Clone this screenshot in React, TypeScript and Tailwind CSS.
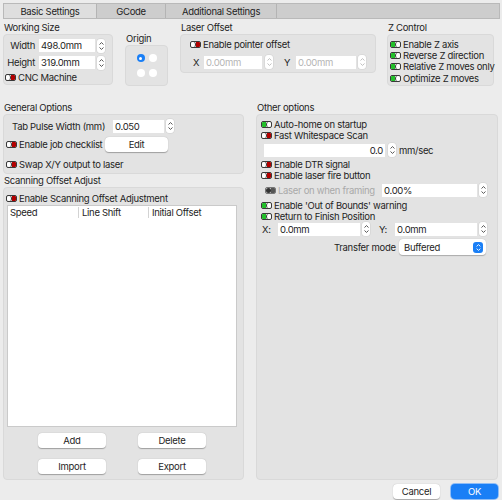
import React from "react"

const font = { fontFamily: "Inter, 'Noto Sans', sans-serif" }

function Toggle({ on = false, disabled = false }: { on?: boolean; disabled?: boolean }) {
    if (disabled) {
        return (
            <div className="flex h-[7px] w-[11px] shrink-0 items-center overflow-hidden rounded-[2px] border border-[#777] bg-[#cfcfcf]">
                <div className="h-full w-[5px] rounded-full bg-[#333]" />
                <div className="h-full flex-1 bg-[#555]" />
            </div>
        )
    }
    return on ? (
        <div className="flex h-[7px] w-[11px] shrink-0 items-center overflow-hidden rounded-[2px] border border-[#3a3a3a]">
            <div className="h-full flex-1 bg-[#22c02a]" />
            <div className="h-full w-[5px] rounded-full border-l border-[#3a3a3a] bg-white" />
        </div>
    ) : (
        <div className="flex h-[7px] w-[11px] shrink-0 items-center overflow-hidden rounded-[2px] border border-[#3a3a3a]">
            <div className="h-full w-[5px] rounded-full border-r border-[#3a3a3a] bg-white" />
            <div className="h-full flex-1 bg-[#b20000]" />
        </div>
    )
}

function Check({ label, on, dim }: { label: string; on?: boolean; dim?: boolean }) {
    return (
        <div className={`flex h-[11px] items-center gap-[2px] whitespace-nowrap ${dim ? "text-[#a9a9a9]" : ""}`}>
            <Toggle on={on} disabled={dim} />
            <span>{label}</span>
        </div>
    )
}

function Spin({ dim }: { dim?: boolean }) {
    const c = dim ? "#b8b8b8" : "#444"
    return (
        <div className="flex h-[14px] w-[8px] shrink-0 flex-col items-center justify-center gap-[2px] rounded-[3px] bg-white shadow-[0_0_0_0.5px_#cfcfcf]">
            <svg width="5" height="3" viewBox="0 0 5 3"><path d="M0.5 2.5 L2.5 0.6 L4.5 2.5" fill="none" stroke={c} strokeWidth="0.9" /></svg>
            <svg width="5" height="3" viewBox="0 0 5 3"><path d="M0.5 0.5 L2.5 2.4 L4.5 0.5" fill="none" stroke={c} strokeWidth="0.9" /></svg>
        </div>
    )
}

function Field({ value, w, dim, right }: { value: string; w: string; dim?: boolean; right?: boolean }) {
    return (
        <div className={`flex h-[13px] shrink-0 items-center bg-white px-[2px] ${w} ${right ? "justify-end" : ""} ${dim ? "text-[#b5b5b5]" : ""}`}>
            {value}
        </div>
    )
}

function Btn({ label, w }: { label: string; w: string }) {
    return (
        <div className={`flex h-[15px] shrink-0 items-center justify-center rounded-[4px] bg-white shadow-[0_0.5px_1px_rgba(0,0,0,0.3)] ${w}`}>
            {label}
        </div>
    )
}

function Title({ text }: { text: string }) {
    return <div className="h-[11px] whitespace-nowrap pl-[1px] leading-[11px]">{text}</div>
}

const box = "rounded-[4px] border border-[#d9d9d9] bg-[#e3e3e3]"

export default function App() {
    return (
        <div style={font} className="flex h-[500px] w-[502px] flex-col overflow-hidden whitespace-nowrap bg-[#ececec] text-[9.5px] leading-[11px] tracking-[-0.3px] text-[#1e1e1e]">
            {/* tabs */}
            <div className="ml-[3px] mr-[2px] mt-[3px] flex h-[16px] border border-[#b9b9b9] bg-[#cdcdcd]">
                <div className="flex w-[93px] items-center justify-center border-r border-[#b4b4b4] bg-[#dedede]">Basic Settings</div>
                <div className="flex w-[69px] items-center justify-center border-r border-[#b4b4b4]">GCode</div>
                <div className="flex w-[111px] items-center justify-center border-r border-[#b4b4b4]">Additional Settings</div>
            </div>

            {/* top row */}
            <div className="ml-[3px] mt-[3px] flex">
                <div className="w-[110px]">
                    <Title text="Working Size" />
                    <div className={`${box} mt-[1px] h-[51px] pt-[4px]`}>
                        <div className="flex h-[13px] items-center">
                            <span className="w-[31px] text-right">Width</span>
                            <div className="ml-[4px]"><Field value="498.0mm" w="w-[56px]" /></div>
                            <div className="ml-[2px]"><Spin /></div>
                        </div>
                        <div className="mt-[4px] flex h-[13px] items-center">
                            <span className="w-[31px] text-right">Height</span>
                            <div className="ml-[4px]"><Field value="319.0mm" w="w-[56px]" /></div>
                            <div className="ml-[2px]"><Spin /></div>
                        </div>
                        <div className="ml-[1px] mt-[3px]"><Check label="CNC Machine" /></div>
                    </div>
                </div>
                <div className="ml-[12px] w-[43px] pt-[11px]">
                    <div className="h-[11px] pl-[1px]">Origin</div>
                    <div className={`${box} mt-[1px] flex h-[41px] items-center justify-center`}>
                        <div className="grid grid-cols-2 gap-x-[4px] gap-y-[7px]">
                            <div className="flex h-[8px] w-[8px] items-center justify-center rounded-full bg-[#1a7ff6]">
                                <div className="h-[3px] w-[3px] rounded-full bg-white" />
                            </div>
                            <div className="h-[8px] w-[8px] rounded-full bg-white" />
                            <div className="h-[8px] w-[8px] rounded-full bg-white" />
                            <div className="h-[8px] w-[8px] rounded-full bg-white" />
                        </div>
                    </div>
                </div>
                <div className="ml-[12px] w-[196px]">
                    <Title text="Laser Offset" />
                    <div className={`${box} mt-[1px] h-[39px] pl-[9px] pt-[4px]`}>
                        <Check label="Enable pointer offset" />
                        <div className="mt-[5px] flex h-[14px] items-center">
                            <span className="ml-[3px] w-[11px]">X</span>
                            <Field value="0.00mm" w="w-[58px]" dim />
                            <div className="ml-[3px]"><Spin dim /></div>
                            <span className="ml-[11px] w-[12px]">Y</span>
                            <Field value="0.00mm" w="w-[60px]" dim />
                            <div className="ml-[2px]"><Spin dim /></div>
                        </div>
                    </div>
                </div>
                <div className="ml-[11px] w-[107px]">
                    <Title text="Z Control" />
                    <div className={`${box} mt-[1px] flex h-[52px] flex-col pl-[2px] pt-[4px]`}>
                        <Check label="Enable Z axis" on />
                        <Check label="Reverse Z direction" on />
                        <Check label="Relative Z moves only" on />
                        <div className="mt-[1px]"><Check label="Optimize Z moves" on /></div>
                    </div>
                </div>
            </div>

            {/* main columns */}
            <div className="ml-[3px] mt-[16px] flex">
                <div className="w-[241px]">
                    <Title text="General Options" />
                    <div className={`${box} mt-[1px] h-[60px] pt-[4px]`}>
                        <div className="flex h-[14px] items-center">
                            <span className="ml-[8px] w-[101px]">Tab Pulse Width (mm)</span>
                            <Field value="0.050" w="w-[51px]" />
                            <div className="ml-[2px]"><Spin /></div>
                        </div>
                        <div className="mt-[5px] flex h-[13px] items-center pl-[2px]">
                            <div className="w-[99px]"><Check label="Enable job checklist" /></div>
                            <Btn label="Edit" w="w-[63px] h-[13px]" />
                        </div>
                        <div className="mt-[8px] pl-[2px]"><Check label="Swap X/Y output to laser" /></div>
                    </div>
                    <div className="mt-[1px]"><Title text="Scanning Offset Adjust" /></div>
                    <div className={`${box} mt-[1px] h-[293px] px-[2px] pt-[5px]`}>
                        <Check label="Enable Scanning Offset Adjustment" />
                        <div className="ml-[1px] mt-[1px] h-[222px] w-[230px] border border-[#cacaca] bg-white">
                            <div className="flex h-[12px] items-center">
                                <div className="w-[71px] border-r border-[#d3d3d3] pl-[2px]">Speed</div>
                                <div className="w-[70px] border-r border-[#d3d3d3] pl-[3px]">Line Shift</div>
                                <div className="pl-[3px]">Initial Offset</div>
                            </div>
                        </div>
                        <div className="mt-[6px] flex gap-[32px] pl-[32px]">
                            <Btn label="Add" w="w-[68px]" />
                            <Btn label="Delete" w="w-[68px]" />
                        </div>
                        <div className="mt-[11px] flex gap-[32px] pl-[32px]">
                            <Btn label="Import" w="w-[68px]" />
                            <Btn label="Export" w="w-[68px]" />
                        </div>
                    </div>
                </div>

                <div className="ml-[12px] w-[242px]">
                    <Title text="Other options" />
                    <div className={`${box} mt-[1px] h-[366px] pl-[4px] pt-[4px]`}>
                        <Check label="Auto-home on startup" on />
                        <Check label="Fast Whitespace Scan" />
                        <div className="mt-[2px] flex h-[14px] items-center">
                            <div className="ml-[3px]"><Field value="0.0" w="w-[121px]" right /></div>
                            <div className="ml-[3px]"><Spin /></div>
                            <span className="ml-[3px]">mm/sec</span>
                        </div>
                        <div className="mt-[2px]"><Check label="Enable DTR signal" /></div>
                        <Check label="Enable laser fire button" />
                        <div className="mt-[2px] flex h-[14px] items-center">
                            <div className="ml-[4px] w-[117px]"><Check label="Laser on when framing" dim /></div>
                            <Field value="0.00%" w="w-[95px]" />
                            <div className="ml-[2px]"><Spin /></div>
                        </div>
                        <div className="mt-[3px]"><Check label="Enable 'Out of Bounds' warning" on /></div>
                        <Check label="Return to Finish Position" on />
                        <div className="flex h-[14px] items-center">
                            <span className="ml-[1px] w-[16px]">X:</span>
                            <Field value="0.0mm" w="w-[82px]" />
                            <div className="ml-[2px]"><Spin /></div>
                            <span className="ml-[9px] w-[16px]">Y:</span>
                            <Field value="0.0mm" w="w-[82px]" />
                            <div className="ml-[2px]"><Spin /></div>
                        </div>
                        <div className="mt-[3px] flex h-[16px] items-center">
                            <span className="ml-[73px] w-[65px]">Transfer mode</span>
                            <div className="flex h-[16px] w-[87px] items-center justify-between rounded-[4px] bg-white pl-[5px] pr-[3px] shadow-[0_0.5px_1px_rgba(0,0,0,0.25)]">
                                <span>Buffered</span>
                                <div className="flex h-[11px] w-[10px] flex-col items-center justify-center gap-[1px] rounded-[3px] bg-[#1a7ff6]">
                                    <svg width="5" height="3" viewBox="0 0 5 3"><path d="M0.6 2.4 L2.5 0.6 L4.4 2.4" fill="none" stroke="white" strokeWidth="0.9" /></svg>
                                    <svg width="5" height="3" viewBox="0 0 5 3"><path d="M0.6 0.6 L2.5 2.4 L4.4 0.6" fill="none" stroke="white" strokeWidth="0.9" /></svg>
                                </div>
                            </div>
                        </div>
                    </div>
                </div>
            </div>

            {/* footer */}
            <div className="mr-[4px] mt-[4px] flex justify-end gap-[11px]">
                <Btn label="Cancel" w="w-[47px]" />
                <div className="flex h-[15px] w-[47px] items-center justify-center rounded-[4px] bg-[#1a7ff6] text-white shadow-[0_0_0_1px_#8fbdf6]">OK</div>
            </div>
        </div>
    )
}
